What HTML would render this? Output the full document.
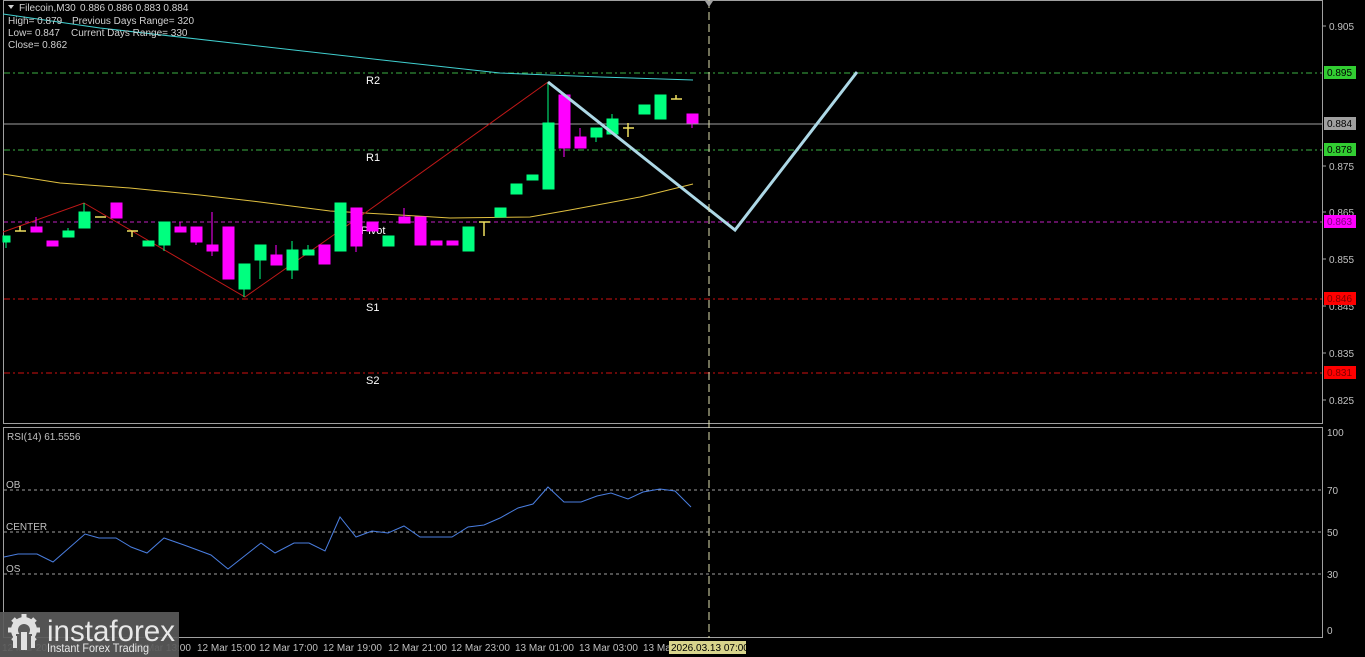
<!DOCTYPE html>
<html><head><meta charset="utf-8"><style>
html,body{margin:0;padding:0;background:#000;width:1365px;height:657px;overflow:hidden}
svg{display:block}
text{font-family:"Liberation Sans",sans-serif}
</style></head><body>
<svg width="1365" height="657" viewBox="0 0 1365 657" xmlns="http://www.w3.org/2000/svg">
<rect width="1365" height="657" fill="#000"/>
<rect x="3.5" y="0.5" width="1319" height="423" fill="none" stroke="#a0a0a0" stroke-width="1"/>
<rect x="3.5" y="427.5" width="1319" height="210" fill="none" stroke="#a0a0a0" stroke-width="1"/>
<line x1="4" y1="73" x2="1322" y2="73" stroke="#3cb043" stroke-dasharray="6,3,2,3"/>
<line x1="4" y1="124" x2="1322" y2="124" stroke="#a0a0a0"/>
<line x1="4" y1="150" x2="1322" y2="150" stroke="#3cb043" stroke-dasharray="6,3,2,3"/>
<line x1="4" y1="222" x2="1322" y2="222" stroke="#c020c0" stroke-dasharray="4,3"/>
<line x1="4" y1="299" x2="1322" y2="299" stroke="#d01010" stroke-dasharray="6,3,2,3"/>
<line x1="4" y1="373" x2="1322" y2="373" stroke="#d01010" stroke-dasharray="6,3,2,3"/>
<g fill="#fff" font-size="11">
<text x="366" y="84">R2</text><text x="366" y="161">R1</text><text x="361" y="234">Pivot</text><text x="366" y="311">S1</text><text x="366" y="384">S2</text>
</g>
<polyline fill="none" stroke="#40d0d0" stroke-width="1" points="3,14 100,28 250,45 400,62 500,73 600,77 693,80"/>
<polyline fill="none" stroke="#e0c040" stroke-width="1" points="3,174 60,183 130,188 200,195 260,202 330,211 400,215 450,218 530,217 570,210 640,197 693,184"/>
<polyline fill="none" stroke="#c01818" stroke-width="1" points="3,232 84,203 245,297 365,213 548,82"/>
<g>
<g stroke="#00ff7f" fill="#00ff7f">
<line x1="6" y1="236" x2="6" y2="248"/><rect x="3" y="236" width="7" height="6"/>
<line x1="68" y1="228" x2="68" y2="237"/><rect x="63" y="231" width="11" height="6"/>
<line x1="84" y1="203" x2="84" y2="228"/><rect x="79" y="212" width="11" height="16"/>
<rect x="143" y="241" width="11" height="5"/>
<line x1="164" y1="222" x2="164" y2="251"/><rect x="159" y="222" width="11" height="23"/>
<line x1="244" y1="264" x2="244" y2="297"/><rect x="239" y="264" width="11" height="25"/>
<line x1="260" y1="245" x2="260" y2="279"/><rect x="255" y="245" width="11" height="15"/>
<line x1="292" y1="241" x2="292" y2="279"/><rect x="287" y="250" width="11" height="20"/>
<line x1="308" y1="245" x2="308" y2="255"/><rect x="303" y="250" width="11" height="5"/>
<rect x="335" y="203" width="11" height="48"/>
<rect x="383" y="236" width="11" height="10"/>
<rect x="463" y="227" width="11" height="24"/>
<rect x="495" y="208" width="11" height="9"/>
<rect x="511" y="184" width="11" height="10"/>
<rect x="527" y="175" width="11" height="5"/>
<line x1="548" y1="82" x2="548" y2="123"/><rect x="543" y="123" width="11" height="66"/>
<line x1="596" y1="128" x2="596" y2="142"/><rect x="591" y="128" width="11" height="9"/>
<line x1="612" y1="114" x2="612" y2="134"/><rect x="607" y="119" width="11" height="15"/>
<rect x="639" y="105" width="11" height="9"/>
<rect x="655" y="95" width="11" height="24"/>
</g>
<g stroke="#ff00ff" fill="#ff00ff">
<line x1="36" y1="217" x2="36" y2="232"/><rect x="31" y="227" width="11" height="5"/>
<rect x="47" y="241" width="11" height="5"/>
<rect x="111" y="203" width="11" height="15"/>
<line x1="180" y1="222" x2="180" y2="232"/><rect x="175" y="227" width="11" height="5"/>
<line x1="196" y1="227" x2="196" y2="245"/><rect x="191" y="227" width="11" height="15"/>
<line x1="212" y1="212" x2="212" y2="256"/><rect x="207" y="245" width="11" height="6"/>
<rect x="223" y="227" width="11" height="52"/>
<line x1="276" y1="245" x2="276" y2="265"/><rect x="271" y="255" width="11" height="10"/>
<rect x="319" y="245" width="11" height="19"/>
<line x1="356" y1="208" x2="356" y2="252"/><rect x="351" y="208" width="11" height="38"/>
<rect x="367" y="222" width="11" height="9"/>
<line x1="404" y1="208" x2="404" y2="223"/><rect x="399" y="217" width="11" height="6"/>
<rect x="415" y="217" width="11" height="28"/>
<rect x="431" y="241" width="11" height="4"/>
<rect x="447" y="241" width="11" height="4"/>
<line x1="564" y1="95" x2="564" y2="157"/><rect x="559" y="95" width="11" height="53"/>
<line x1="580" y1="128" x2="580" y2="148"/><rect x="575" y="137" width="11" height="11"/>
<line x1="692" y1="114" x2="692" y2="128"/><rect x="687" y="114" width="11" height="9"/>
</g>
<g stroke="#f0e060" stroke-width="1.5">
<line x1="15" y1="231" x2="26" y2="231"/><line x1="20" y1="226" x2="20" y2="231"/>
<line x1="95" y1="217" x2="106" y2="217"/>
<line x1="127" y1="231" x2="138" y2="231"/><line x1="132" y1="231" x2="132" y2="237"/>
<line x1="479" y1="222" x2="490" y2="222"/><line x1="484" y1="222" x2="484" y2="236"/>
<line x1="623" y1="128" x2="634" y2="128"/><line x1="628" y1="123" x2="628" y2="137"/>
<line x1="671" y1="99" x2="682" y2="99"/><line x1="676" y1="95" x2="676" y2="99"/>
</g>
</g>
<polyline fill="none" stroke="#add8e6" stroke-width="3" points="548,82 735,230 857,72"/>
<line x1="709" y1="0" x2="709" y2="638" stroke="#e0e0b0" stroke-dasharray="8,4"/>
<polygon points="709,7 705,1 713,1" fill="#a0a0a0"/>
<g fill="#d0d0d0" font-size="10">
<polygon points="8,5 14,5 11,9" fill="#d0d0d0"/>
<text x="19" y="11">Filecoin,M30</text><text x="80" y="11">0.886 0.886 0.883 0.884</text>
<text x="8" y="24">High= 0.879</text><text x="72" y="24">Previous Days Range= 320</text>
<text x="8" y="36">Low= 0.847</text><text x="71" y="36">Current Days Range= 330</text>
<text x="8" y="48">Close= 0.862</text>
</g>
<g fill="#c0c0c0" font-size="10">
<text x="1329" y="30">0.905</text><text x="1329" y="170">0.875</text><text x="1329" y="216">0.865</text>
<text x="1329" y="263">0.855</text><text x="1329" y="310">0.845</text><text x="1329" y="357">0.835</text><text x="1329" y="404">0.825</text>
<text x="1327" y="436">100</text><text x="1327" y="494">70</text><text x="1327" y="536">50</text><text x="1327" y="578">30</text><text x="1327" y="634">0</text>
</g>
<g stroke="#a0a0a0"><line x1="1323" y1="26" x2="1326" y2="26"/><line x1="1323" y1="166" x2="1326" y2="166"/><line x1="1323" y1="212" x2="1326" y2="212"/><line x1="1323" y1="259" x2="1326" y2="259"/><line x1="1323" y1="306" x2="1326" y2="306"/><line x1="1323" y1="353" x2="1326" y2="353"/><line x1="1323" y1="400" x2="1326" y2="400"/></g>
<g font-size="10">
<rect x="1324" y="66" width="32" height="13" fill="#32cd32"/><text x="1327" y="76" fill="#000">0.895</text>
<rect x="1324" y="117" width="32" height="13" fill="#a0a0a0"/><text x="1327" y="127" fill="#000">0.884</text>
<rect x="1324" y="143" width="32" height="13" fill="#32cd32"/><text x="1327" y="153" fill="#000">0.878</text>
<rect x="1324" y="215" width="32" height="13" fill="#ff00ff"/><text x="1327" y="225" fill="#800080">0.863</text>
<rect x="1324" y="292" width="32" height="13" fill="#ff0000"/><text x="1327" y="302" fill="#800000">0.846</text>
<rect x="1324" y="366" width="32" height="13" fill="#ff0000"/><text x="1327" y="376" fill="#800000">0.831</text>
</g>
<g stroke="#a0a0a0" stroke-dasharray="3,3"><line x1="4" y1="490" x2="1322" y2="490"/><line x1="4" y1="532" x2="1322" y2="532"/><line x1="4" y1="574" x2="1322" y2="574"/></g>
<g fill="#c0c0c0" font-size="10"><text x="7" y="440">RSI(14) 61.5556</text><text x="6" y="488">OB</text><text x="6" y="530">CENTER</text><text x="6" y="572">OS</text></g>
<polyline fill="none" stroke="#4a7ee0" stroke-width="1" points="4,557 18,554 37,554 53,562 85,534 99,538 116,538 131,547 147,553 164,538 184,545 211,555 228,569 261,543 275,553 294,543 309,543 325,551 340,517 356,537 372,531 388,533 404,526 420,537 452,537 468,527 484,525 500,518 518,508 533,504 548,487 564,502 581,502 597,496 611,493 628,499 643,492 660,489 675,491 691,507"/>
<g fill="#c0c0c0" font-size="10">
<text x="2" y="651">12 Mar 2026</text><text x="132" y="651">12 Mar 13:00</text><text x="197" y="651">12 Mar 15:00</text><text x="259" y="651">12 Mar 17:00</text><text x="323" y="651">12 Mar 19:00</text><text x="388" y="651">12 Mar 21:00</text><text x="451" y="651">12 Mar 23:00</text><text x="515" y="651">13 Mar 01:00</text><text x="579" y="651">13 Mar 03:00</text><text x="643" y="651">13 Mar</text>
</g>
<rect x="669" y="641" width="77" height="13" fill="#d8d48c"/>
<text x="671" y="651" font-size="10" fill="#000">2026.03.13 07:00</text>
<rect x="0" y="612" width="179" height="45" fill="#5a5a5a" fill-opacity="0.92"/>
<g fill="#e0e0e0">
<circle cx="24" cy="630" r="13"/>
<g stroke="#e0e0e0" stroke-width="5"><line x1="24" y1="614" x2="24" y2="646"/><line x1="8" y1="630" x2="40" y2="630"/><line x1="13" y1="619" x2="35" y2="641"/><line x1="35" y1="619" x2="13" y2="641"/></g>
<circle cx="24" cy="630" r="6" fill="#5a5a5a"/>
<rect x="16" y="634" width="16" height="16" fill="#5a5a5a"/>
<rect x="21" y="632" width="6" height="18" fill="#e0e0e0"/>
<rect x="13" y="636" width="4" height="12" fill="#e0e0e0"/><rect x="31" y="636" width="4" height="12" fill="#e0e0e0"/>
</g>
<text x="47" y="641" font-size="30" fill="#e8e8e8" textLength="128" lengthAdjust="spacingAndGlyphs">instaforex</text>
<text x="47" y="652" font-size="12" fill="#e8e8e8" textLength="102" lengthAdjust="spacingAndGlyphs">Instant Forex Trading</text>
</svg>
</body></html>
